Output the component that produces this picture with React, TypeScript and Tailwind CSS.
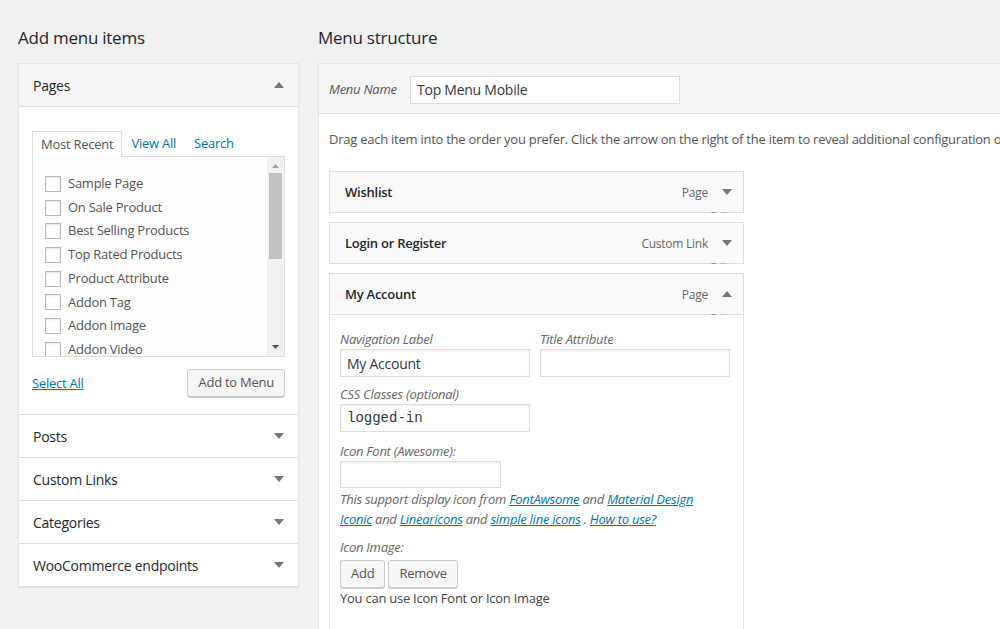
import React from "react";

const FONT = { fontFamily: '"Open Sans", "Noto Sans", Arial, sans-serif' };

function Tri({ up = false, color = "#72777c" }: { up?: boolean; color?: string }) {
  return (
    <svg width="10" height="6" viewBox="0 0 10 6" className="block">
      {up ? <polygon points="0,6 10,6 5,0" fill={color} /> : <polygon points="0,0 10,0 5,6" fill={color} />}
    </svg>
  );
}

function SmallTri({ up = false }: { up?: boolean }) {
  return (
    <svg width="7" height="4" viewBox="0 0 7 4" className="block">
      {up ? <polygon points="0,4 7,4 3.5,0" fill="#a3a3a3" /> : <polygon points="0,0 7,0 3.5,4" fill="#505050" />}
    </svg>
  );
}

function Section({ title, up = false }: { title: string; up?: boolean }) {
  return (
    <div className={`h-[43px] flex items-center justify-between pl-[14px] pr-[14px] border-b border-[#dfdfdf] ${up ? "bg-[#f5f5f5]" : "bg-white"}`}>
      <span className="text-[14px] text-[#23282d] font-medium">{title}</span>
      <Tri up={up} />
    </div>
  );
}

const pages = [
  "Sample Page",
  "On Sale Product",
  "Best Selling Products",
  "Top Rated Products",
  "Product Attribute",
  "Addon Tag",
  "Addon Image",
  "Addon Video",
];

function MenuItem({ title, type, open = false }: { title: string; type: string; open?: boolean }) {
  return (
    <div className="relative h-[42px] border border-[#dfdfdf] bg-[#fafafa] flex items-center justify-between pl-[15px] pr-[11px]">
      <span className="text-[13px] font-semibold text-[#23282d] mt-[1px]">{title}</span>
      <div className="flex items-center gap-[14px]">
        <span className="text-[12px] text-[#666] mt-[1px]">{type}</span>
        <Tri up={open} color="#72777c" />
      </div>
      <div className="absolute right-[14px] top-[38px] h-[3px] overflow-hidden">
        <span className="block text-[11px] leading-[14px] text-[#888] -mt-[1px]">Edit</span>
      </div>
    </div>
  );
}

function Field({ label, value, mono = false, width = "w-[190px]", h = "h-[28px]" }: { label: string; value?: string; mono?: boolean; width?: string; h?: string }) {
  return (
    <div className={width}>
      <div className="text-[13px] italic text-[#666] leading-[19px]">{label}</div>
      <div
        className={`${h} border border-[#ddd] bg-white shadow-[inset_0_1px_2px_rgba(0,0,0,0.07)] flex items-center px-[6px] text-[14px] text-[#32373c]`}
        style={mono ? { fontFamily: '"Liberation Mono", "DejaVu Sans Mono", monospace', fontSize: 14, letterSpacing: 0 } : undefined}
      >
        {value}
      </div>
    </div>
  );
}

const btn = "h-[28px] px-[10px] border border-[#ccc] bg-[#f7f7f7] rounded-[3px] shadow-[0_1px_0_#ccc] flex items-center text-[13px] text-[#555]";

export default function App() {
  return (
    <div className="w-[1000px] h-[629px] bg-[#f1f1f1] overflow-hidden flex text-[#444] tracking-[-0.25px]" style={FONT}>
      {/* Left column */}
      <div className="ml-[18px] w-[281px] shrink-0 pt-[26px]">
        <h2 className="text-[17px] leading-[24px] text-[#23282d] mb-[13px]">Add menu items</h2>
        <div className="border border-[#e5e5e5] border-b-0 bg-white shadow-[0_1px_1px_rgba(0,0,0,0.06)]">
          <Section title="Pages" up />
          <div className="h-[308px] border-b border-[#dfdfdf] pl-[13px] pr-[13px] pt-[24px]">
            <div className="flex items-end h-[25px] text-[13px]">
              <div className="h-[26px] border border-[#ddd] border-b-0 bg-white px-[8px] flex items-center text-[#555] relative z-10 -mb-[1px]">Most Recent</div>
              <div className="ml-[9px] h-[25px] flex items-center text-[#0073aa]">View All</div>
              <div className="ml-[18px] h-[25px] flex items-center text-[#0073aa]">Search</div>
            </div>
            <div className="h-[201px] border border-[#ddd] bg-[#fdfdfd] flex">
              <div className="flex-1 pt-[15px] pl-[12px] overflow-hidden">
                {pages.map((p) => (
                  <div key={p} className="h-[23.7px] flex items-center">
                    <span className="w-[16px] h-[16px] border border-[#b4b9be] bg-white shadow-[inset_0_1px_2px_rgba(0,0,0,0.1)] shrink-0" />
                    <span className="ml-[7px] text-[13px] text-[#555]">{p}</span>
                  </div>
                ))}
              </div>
              <div className="w-[17px] bg-[#f1f1f1] flex flex-col items-center">
                <div className="h-[16px] flex items-center justify-center pt-[1px]">
                  <SmallTri up />
                </div>
                <div className="w-[13px] h-[86px] bg-[#c1c1c1]" />
                <div className="flex-1" />
                <div className="h-[16px] flex items-center justify-center pb-[2px]">
                  <SmallTri />
                </div>
              </div>
            </div>
            <div className="flex items-center justify-between mt-[12px]">
              <span className="text-[13px] text-[#0073aa] underline mt-[2px]">Select All</span>
              <div className={btn}>Add to Menu</div>
            </div>
          </div>
          <Section title="Posts" />
          <Section title="Custom Links" />
          <Section title="Categories" />
          <Section title="WooCommerce endpoints" />
        </div>
      </div>

      {/* Right column */}
      <div className="ml-[19px] flex-1 min-w-0 pt-[26px]">
        <h2 className="text-[17px] leading-[24px] text-[#23282d] mb-[13px] whitespace-nowrap">Menu structure</h2>
        <div className="border-t border-l border-[#e5e5e5] bg-white h-[600px]">
          <div className="h-[50px] bg-[#f5f5f5] border-b border-[#dfdfdf] flex items-center pl-[10px] pt-[2px]">
            <span className="text-[13px] italic text-[#555] w-[81px]">Menu Name</span>
            <div className="w-[270px] h-[28px] border border-[#ddd] bg-white flex items-center px-[6px] text-[14px] text-[#32373c]">
              Top Menu Mobile
            </div>
          </div>
          <div className="pl-[10px]">
            <p className="text-[13px] leading-[20px] text-[#555] mt-[15px] whitespace-nowrap">
              Drag each item into the order you prefer. Click the arrow on the right of the item to reveal additional configuration options.
            </p>
            <div className="w-[415px] mt-[22px]">
              <MenuItem title="Wishlist" type="Page" />
              <div className="h-[9px]" />
              <MenuItem title="Login or Register" type="Custom Link" />
              <div className="h-[9px]" />
              <MenuItem title="My Account" type="Page" open />
              <div className="border border-t-0 border-[#dfdfdf] bg-white pl-[10px] pt-[15px] h-[400px]">
                <div className="flex gap-[10px]">
                  <Field label="Navigation Label" value="My Account" />
                  <Field label="Title Attribute" value="" />
                </div>
                <div className="mt-[8px]">
                  <Field label="CSS Classes (optional)" value="logged-in" mono />
                </div>
                <div className="mt-[10px]">
                  <Field label="Icon Font (Awesome):" value="" width="w-[161px]" h="h-[27px]" />
                </div>
                <p className="text-[13px] leading-[20px] italic text-[#666] mt-[1px] pr-[30px]">
                  This support display icon from <span className="text-[#0073aa] underline">FontAwsome</span> and{" "}
                  <span className="text-[#0073aa] underline">Material Design Iconic</span> and{" "}
                  <span className="text-[#0073aa] underline">Linearicons</span> and{" "}
                  <span className="text-[#0073aa] underline">simple line icons</span> .{" "}
                  <span className="text-[#0073aa] underline">How to use?</span>
                </p>
                <div className="text-[13px] italic text-[#666] leading-[20px] mt-[8px]">Icon Image:</div>
                <div className="flex gap-[3px] mt-[3px]">
                  <div className={btn}>Add</div>
                  <div className={btn}>Remove</div>
                </div>
                <div className="text-[13px] leading-[20px] text-[#444]">You can use Icon Font or Icon Image</div>
              </div>
            </div>
          </div>
        </div>
      </div>
    </div>
  );
}
